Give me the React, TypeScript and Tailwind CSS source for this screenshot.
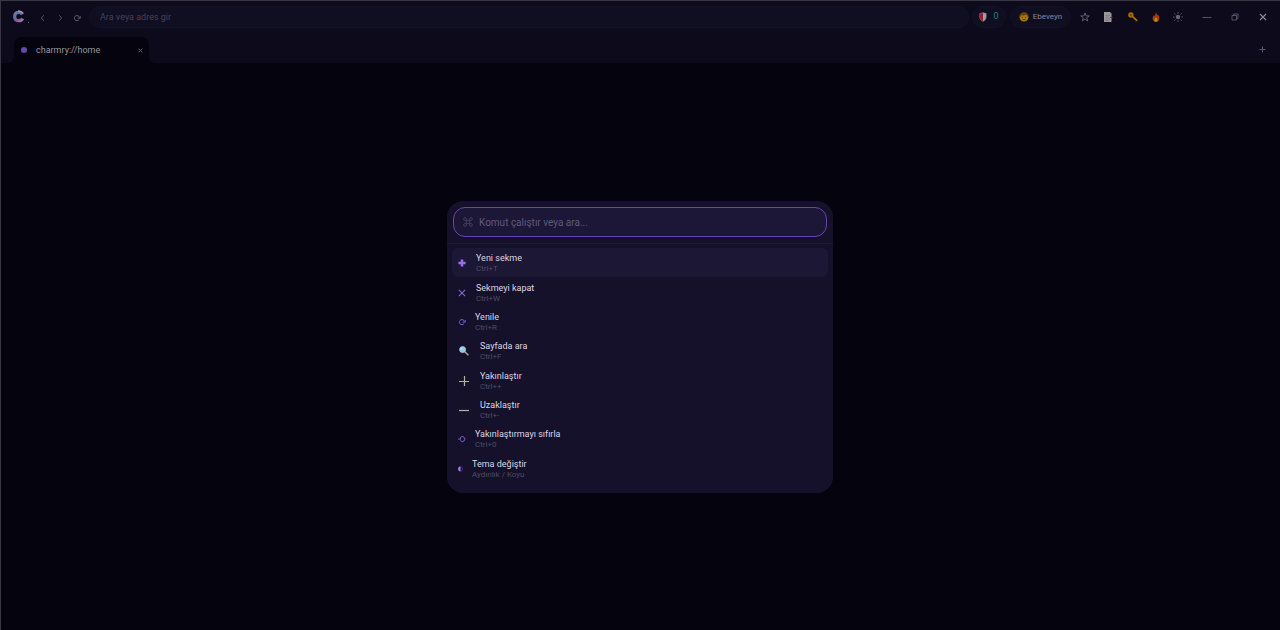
import type { ReactNode } from "react";

function Logo() {
  return (
    <svg viewBox="0 0 20 16" className="h-4 w-5" aria-hidden="true">
      <defs>
        <linearGradient id="logo" x1="0" y1="0" x2="1" y2="1">
          <stop offset="0" stopColor="#74809f" />
          <stop offset="0.4" stopColor="#4d72a8" />
          <stop offset="0.65" stopColor="#94508f" />
          <stop offset="1" stopColor="#8d88ad" />
        </linearGradient>
      </defs>
      <path d="M12.300 5.500C11.400 3.900 10.200 3.300 8.600 3.300 6.100 3.300 4.700 5.200 4.700 7.700c0 2.600 1.800 4 4.200 4 1.700 0 3-.7 3.700-2.200" fill="none" stroke="url(#logo)" strokeWidth="3.200" />
      <path d="M8 2.200c2-.2 3.800.4 5.200 2.300" fill="none" stroke="#9a97ac" strokeWidth="1.600" />
      <rect x="18" y="13" width="1" height="1" fill="#65617c" />
    </svg>
  );
}

function Reload({ className }: { className: string }) {
  return (
    <svg viewBox="0 0 10 10" className={className} fill="none" stroke="currentColor" strokeWidth="1.200" aria-hidden="true">
      <path d="M7.300 7.300A3.200 3.200 0 1 1 8 4.300" />
      <path d="M5.900 5.200h3.200V2.800" />
    </svg>
  );
}

function ResetIcon() {
  return (
    <svg viewBox="0 0 10 10" className="h-2 w-2" fill="none" stroke="currentColor" strokeWidth="1.200" aria-hidden="true">
      <path d="M3 3.200A3.100 3.100 0 1 1 3 7" />
      <path d="M.2 5.200h3.400M2.900 3v2.200" />
    </svg>
  );
}

function Shield() {
  return (
    <svg viewBox="0 0 8 10" className="h-2.5 w-2" aria-hidden="true">
      <path d="M4 .3 7.600 1.300V5C7.600 7.200 6 8.800 4 9.800 2 8.800.4 7.200.4 5V1.300Z" fill="#77757c" />
      <path d="M4 1V9C2.200 8.100 1.100 6.800 1.100 5V1.800Z" fill="#9c1c26" />
      <path d="M4 1V9C5.800 8.100 6.900 6.800 6.900 5V1.800Z" fill="#a3a1a8" />
    </svg>
  );
}

function Face() {
  return (
    <svg viewBox="0 0 10 10" className="h-2.5 w-2.5" aria-hidden="true">
      <circle cx="5" cy="5.200" r="4.400" fill="#a9780f" />
      <path d="M.4 4.800C.5 1.800 2.400.2 5 .2s4.500 1.600 4.600 4.600L8.500 4.500 7.300 2.800C5.800 3.500 3.900 3.500 2.500 3.200L1.500 4.800Z" fill="#6b4010" />
      <path d="M2.800 5.400h1.200M6 5.400h1.200M3.600 7.500h2.800" stroke="#50300c" strokeWidth=".9" />
    </svg>
  );
}

function Star() {
  return (
    <svg viewBox="0 0 10 10" className="h-2.5 w-2.5" fill="none" stroke="currentColor" strokeWidth=".9" aria-hidden="true">
      <path d="M5 .9 6.100 3.900H9.300L6.700 5.800 7.700 9 5 7 2.300 9 3.300 5.800.7 3.900H3.900Z" />
    </svg>
  );
}

function NoteIcon() {
  return (
    <svg viewBox="0 0 10 10" className="h-2.5 w-2.5" aria-hidden="true">
      <path d="M1 0H7L8.500 1.500V10H1Z" fill="#9b999b" />
      <path d="M7 0V1.500H8.500" fill="#5b595f" />
      <path d="M2.300 3.400h4.500M2.300 5.200h4M2.300 7h5M2.300 8.700h4" stroke="#6e6c70" strokeWidth=".6" />
      <path d="M7 5.500h2.500" stroke="#951c52" />
    </svg>
  );
}

function KeyIcon() {
  return (
    <svg viewBox="0 0 10 10" className="h-2.5 w-2.5" fill="none" stroke="#a86f00" aria-hidden="true">
      <circle cx="2.900" cy="2.900" r="1.700" strokeWidth="2" />
      <path d="m4.400 4.400 4.900 4.400" strokeWidth="1.700" />
      <path d="m6.200 7.600 1-1M7.800 9.200l1-1" />
    </svg>
  );
}

function Flame() {
  return (
    <svg viewBox="0 0 8 10" className="h-2.5 w-2" aria-hidden="true">
      <path d="M4 0C4.200 1.800 5.600 2.600 6.100 3.700L6.600 3C7.400 4.200 7.700 5.800 7.200 7.400 6.700 9 5.500 9.900 4 9.900S1 9 .7 7.400C.3 5.500 1 4.300 1.800 3.300L2.300 4.300C3 3 3.900 2 4 0Z" fill="#a23a08" />
      <path d="M4 5C4.300 6 5.800 6.600 5.700 8 5.600 9.300 5 9.800 4 9.800S2.200 9.100 2.200 8C2.200 6.700 3.600 6.200 4 5Z" fill="#a89017" />
    </svg>
  );
}

function Sun() {
  return (
    <svg viewBox="0 0 10 10" className="h-2.5 w-2.5" stroke="currentColor" strokeWidth=".9" aria-hidden="true">
      <circle cx="5" cy="5" r="2.200" fill="currentColor" stroke="none" />
      <path d="M5 0v1.500M5 8.500V10M0 5h1.500M8.500 5H10M1.300 1.300l1.100 1.100M7.600 7.600l1.100 1.100M8.700 1.300 7.600 2.400M2.400 7.600 1.300 8.700" />
    </svg>
  );
}

function CommandGlyph() {
  return (
    <svg viewBox="0 0 10 10" className="h-2.5 w-2.5 shrink-0 text-[#453f60]" fill="none" stroke="currentColor" strokeWidth=".9" aria-hidden="true">
      <path d="M3.400 3.400V2A1.400 1.400 0 1 0 2 3.400H8A1.400 1.400 0 1 0 6.600 2V8A1.400 1.400 0 1 0 8 6.600H2A1.400 1.400 0 1 0 3.400 8Z" />
    </svg>
  );
}

function Stroke({ d, className, width = 1 }: { d: string; className: string; width?: number }) {
  return (
    <svg viewBox="0 0 10 10" className={className} fill="none" stroke="currentColor" strokeWidth={width} aria-hidden="true">
      <path d={d} />
    </svg>
  );
}

function Magnifier() {
  return (
    <svg viewBox="0 0 10 10" className="h-2.5 w-2.5" aria-hidden="true">
      <path d="m5.800 5.800 3.600 3.400" stroke="#a9a5a3" strokeWidth="1.500" />
      <circle cx="3.600" cy="3.600" r="3" fill="#8fcbe9" stroke="#b9cbd6" strokeWidth=".8" />
      <path d="M2 3.500A1.700 1.700 0 0 1 3.500 2" stroke="#e3f5fc" fill="none" strokeWidth=".9" />
    </svg>
  );
}

type Command = { title: string; hint: string; icon: ReactNode; iconBox: string };

const commands: Command[] = [
  { title: "Yeni sekme", hint: "Ctrl+T", iconBox: "w-[18px]", icon: <Stroke d="M5 .5v9M.5 5h9" width={3.2} className="h-2 w-2 text-[#9b6cf0]" /> },
  { title: "Sekmeyi kapat", hint: "Ctrl+W", iconBox: "w-[18px]", icon: <Stroke d="M1 1l8 8M9 1l-8 8" width={1.4} className="h-2 w-2" /> },
  { title: "Yenile", hint: "Ctrl+R", iconBox: "w-[17px]", icon: <Reload className="h-2 w-2" /> },
  { title: "Sayfada ara", hint: "Ctrl+F", iconBox: "w-[22px] pl-px", icon: <Magnifier /> },
  { title: "Yakınlaştır", hint: "Ctrl++", iconBox: "w-[22px] pl-px", icon: <Stroke d="M5.500 0v10M0 5.500h10" width={1.2} className="h-2.5 w-2.5 text-[#b3afa4]" /> },
  { title: "Uzaklaştır", hint: "Ctrl+-", iconBox: "w-[22px] pl-px", icon: <Stroke d="M0 5.500h10" width={1.2} className="h-2.5 w-2.5 text-[#b3afa4]" /> },
  { title: "Yakınlaştırmayı sıfırla", hint: "Ctrl+0", iconBox: "w-[17px]", icon: <ResetIcon /> },
  {
    title: "Tema değiştir",
    hint: "Aydınlık / Koyu",
    iconBox: "w-[14px]",
    icon: (
      <svg viewBox="0 0 6 6" className="h-1.5 w-1.5" aria-hidden="true">
        <circle cx="2.500" cy="3" r="2.200" fill="none" stroke="#54399a" strokeWidth=".6" />
        <path d="M2.500 .6A2.400 2.400 0 0 0 2.500 5.400Z" fill="#a27bf5" />
      </svg>
    ),
  },
];

function BarButton({ label, className, children }: { label: string; className: string; children: ReactNode }) {
  return (
    <button type="button" aria-label={label} className={`flex h-5 shrink-0 items-center justify-center ${className}`}>
      {children}
    </button>
  );
}

function Toolbar() {
  return (
    <div className="flex h-[31px] items-center text-[#565169]">
      <div className="ml-[9px] mr-1 shrink-0"><Logo /></div>
      <BarButton label="Geri" className="w-[17px] pt-[3px]"><Stroke d="M6 1.500 3 5 6 8.500" width={1.2} className="h-2 w-2" /></BarButton>
      <BarButton label="İleri" className="w-[17px] pt-[3px]"><Stroke d="M4 1.500 7 5 4 8.500" width={1.2} className="h-2 w-2" /></BarButton>
      <BarButton label="Yenile" className="mr-[3px] w-[18px] pt-0.5 text-[#69647d]"><Reload className="h-2 w-2" /></BarButton>
      <input
        type="text"
        aria-label="Adres"
        placeholder="Ara veya adres gir"
        className="h-[22px] min-w-0 flex-1 rounded-full border border-[#131126] bg-[#100e21] px-[10px] text-[9px] text-[#8a86a0] outline-none placeholder:text-[#464159]"
      />
      <button type="button" aria-label="Engellenen" className="ml-[3px] flex h-[22px] w-[34px] shrink-0 items-center justify-center gap-1.5 rounded-full border border-[#131126] bg-[#100e21] text-[9px] text-[#238079]">
        <Shield />
        <span className="pt-px">0</span>
      </button>
      <button type="button" className="ml-1 flex h-[22px] w-[61px] shrink-0 items-center justify-center gap-1 rounded-full border border-[#131126] bg-[#100e21] text-[8px] text-[#8a869c]">
        <Face />
        <span>Ebeveyn</span>
      </button>
      <BarButton label="Yer imi" className="ml-[3px] w-[21px] text-[#6a657f]"><Star /></BarButton>
      <BarButton label="Notlar" className="w-[25px]"><NoteIcon /></BarButton>
      <BarButton label="Parolalar" className="w-[25px]"><KeyIcon /></BarButton>
      <BarButton label="Temizle" className="w-[22px]"><Flame /></BarButton>
      <BarButton label="Tema" className="w-[22px] text-[#6a657f]"><Sun /></BarButton>
      <BarButton label="Simge durumuna küçült" className="ml-1 w-7"><Stroke d="M.5 5.500h9" className="h-2.5 w-2.5" /></BarButton>
      <BarButton label="Geri yükle" className="w-7"><Stroke d="M2 3.500h4.500V8H2ZM3.500 3.500V2H8v4.500H6.500" className="h-2.5 w-2.5" /></BarButton>
      <BarButton label="Kapat" className="mr-[3px] w-7 text-[#8a869c]"><Stroke d="m2 2 6 6M8 2 2 8" width={1.2} className="h-2.5 w-2.5" /></BarButton>
    </div>
  );
}

function TabStrip() {
  return (
    <div className="flex h-[26px] items-center justify-between text-[#5d586f]">
      <div className="flex h-full items-end">
        <svg viewBox="0 0 6 6" className="ml-[7px] h-1.5 w-1.5 text-[#05030d]" aria-hidden="true"><path d="M6 0V6H0A6 6 0 0 0 6 0" fill="currentColor" /></svg>
        <div className="flex h-full w-[135px] items-center rounded-t-lg bg-[#05030d] pl-[7px] pr-[3px]">
          <span className="h-1.5 w-1.5 rounded-full bg-[#6a45ad]" />
          <span className="ml-[9px] flex-1 pt-px text-[9px] text-[#99969f]">charmry://home</span>
          <button type="button" aria-label="Sekmeyi kapat" className="flex h-4 w-3 items-center justify-center">
            <Stroke d="m1 1 8 8M9 1 1 9" width={2} className="h-[5px] w-[5px]" />
          </button>
        </div>
        <svg viewBox="0 0 6 6" className="h-1.5 w-1.5 text-[#05030d]" aria-hidden="true"><path d="M0 0V6H6A6 6 0 0 1 0 0" fill="currentColor" /></svg>
      </div>
      <button type="button" aria-label="Yeni sekme" className="mr-2 flex h-5 w-5 items-center justify-center">
        <Stroke d="M5.500 1.500v6M2.500 4.500h6" className="h-2.5 w-2.5" />
      </button>
    </div>
  );
}

function CommandPalette() {
  return (
    <section role="dialog" aria-label="Komut paleti" className="w-[386px] rounded-2xl bg-[#15112b] pb-[10px]">
      <div className="border-b border-[#1e1938] p-1.5">
        <label className="flex h-[30px] items-center gap-[6px] rounded-xl border border-[#6944ae] bg-[#1c1737] px-[9px]">
          <CommandGlyph />
          <input type="text" aria-label="Komut" placeholder="Komut çalıştır veya ara..." className="min-w-0 flex-1 bg-transparent pt-0.5 text-[10px] text-[#ddd9ea] outline-none placeholder:text-[#5f5a77]" />
        </label>
      </div>
      <ul className="box-content grid h-[235px] auto-rows-fr px-[5px] pt-1">
        {commands.map((command, index) => (
          <li key={command.title}>
            <button type="button" className={`flex h-full w-full items-center rounded-md pl-[6px] text-left ${index === 0 ? "bg-[#1b1735]" : ""}`}>
              <span className={`flex shrink-0 items-center pt-0.5 text-[#8660dc] ${command.iconBox}`}>{command.icon}</span>
              <span className="flex flex-col pt-[3px]">
                <span className="text-[9px] leading-[11px] text-[#d9d6e3]">{command.title}</span>
                <span className="text-[8px] leading-[10px] text-[#504b69]">{command.hint}</span>
              </span>
            </button>
          </li>
        ))}
      </ul>
    </section>
  );
}

export default function App() {
  return (
    <div className="flex min-h-screen flex-col border-l border-t border-[#393743] bg-[#05030d] font-[Roboto,'Noto_Sans',sans-serif]">
      <header className="bg-[#0c0a1b]">
        <Toolbar />
        <div className="pt-[5px]"><TabStrip /></div>
      </header>
      <main className="flex flex-1 items-center justify-center pr-px">
        <CommandPalette />
      </main>
    </div>
  );
}
